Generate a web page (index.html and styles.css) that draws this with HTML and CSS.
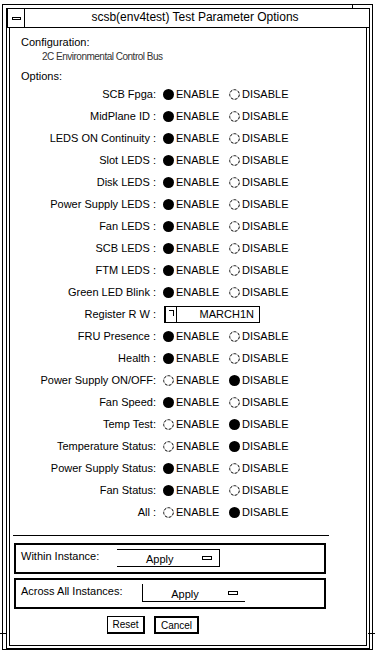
FILE: index.html
```html
<!DOCTYPE html>
<html>
<head>
<meta charset="utf-8">
<link rel="stylesheet" href="styles.css">
</head>
<body>
<div class="window">
  <span class="tick tick-top"></span>
  <span class="tick tick-left"></span>
  <span class="tick tick-right"></span>
  <div class="titlebar">
    <div class="menubtn"><span class="dash"></span></div>
    <div class="title">scsb(env4test) Test Parameter Options</div>
  </div>
  <div class="inner">
    <div class="cfg">Configuration:</div>
    <div class="cfgval">2C Environmental Control Bus</div>
    <div class="opts">Options:</div>
    <div class="rows">
      <div class="row"><span class="lbl">SCB Fpga:</span><span class="opt"><svg class="rd" viewBox="0 0 11 11"><circle cx="5.5" cy="5.5" r="5.5"/></svg>ENABLE</span><span class="opt"><svg class="rd off" viewBox="0 0 11 11"><circle cx="5.5" cy="5.5" r="4.8"/></svg>DISABLE</span></div>
      <div class="row"><span class="lbl">MidPlane ID :</span><span class="opt"><svg class="rd" viewBox="0 0 11 11"><circle cx="5.5" cy="5.5" r="5.5"/></svg>ENABLE</span><span class="opt"><svg class="rd off" viewBox="0 0 11 11"><circle cx="5.5" cy="5.5" r="4.8"/></svg>DISABLE</span></div>
      <div class="row"><span class="lbl">LEDS ON Continuity :</span><span class="opt"><svg class="rd" viewBox="0 0 11 11"><circle cx="5.5" cy="5.5" r="5.5"/></svg>ENABLE</span><span class="opt"><svg class="rd off" viewBox="0 0 11 11"><circle cx="5.5" cy="5.5" r="4.8"/></svg>DISABLE</span></div>
      <div class="row"><span class="lbl">Slot LEDS :</span><span class="opt"><svg class="rd" viewBox="0 0 11 11"><circle cx="5.5" cy="5.5" r="5.5"/></svg>ENABLE</span><span class="opt"><svg class="rd off" viewBox="0 0 11 11"><circle cx="5.5" cy="5.5" r="4.8"/></svg>DISABLE</span></div>
      <div class="row"><span class="lbl">Disk LEDS :</span><span class="opt"><svg class="rd" viewBox="0 0 11 11"><circle cx="5.5" cy="5.5" r="5.5"/></svg>ENABLE</span><span class="opt"><svg class="rd off" viewBox="0 0 11 11"><circle cx="5.5" cy="5.5" r="4.8"/></svg>DISABLE</span></div>
      <div class="row"><span class="lbl">Power Supply LEDS :</span><span class="opt"><svg class="rd" viewBox="0 0 11 11"><circle cx="5.5" cy="5.5" r="5.5"/></svg>ENABLE</span><span class="opt"><svg class="rd off" viewBox="0 0 11 11"><circle cx="5.5" cy="5.5" r="4.8"/></svg>DISABLE</span></div>
      <div class="row"><span class="lbl">Fan LEDS :</span><span class="opt"><svg class="rd" viewBox="0 0 11 11"><circle cx="5.5" cy="5.5" r="5.5"/></svg>ENABLE</span><span class="opt"><svg class="rd off" viewBox="0 0 11 11"><circle cx="5.5" cy="5.5" r="4.8"/></svg>DISABLE</span></div>
      <div class="row"><span class="lbl">SCB LEDS :</span><span class="opt"><svg class="rd" viewBox="0 0 11 11"><circle cx="5.5" cy="5.5" r="5.5"/></svg>ENABLE</span><span class="opt"><svg class="rd off" viewBox="0 0 11 11"><circle cx="5.5" cy="5.5" r="4.8"/></svg>DISABLE</span></div>
      <div class="row"><span class="lbl">FTM LEDS :</span><span class="opt"><svg class="rd" viewBox="0 0 11 11"><circle cx="5.5" cy="5.5" r="5.5"/></svg>ENABLE</span><span class="opt"><svg class="rd off" viewBox="0 0 11 11"><circle cx="5.5" cy="5.5" r="4.8"/></svg>DISABLE</span></div>
      <div class="row"><span class="lbl">Green LED Blink :</span><span class="opt"><svg class="rd" viewBox="0 0 11 11"><circle cx="5.5" cy="5.5" r="5.5"/></svg>ENABLE</span><span class="opt"><svg class="rd off" viewBox="0 0 11 11"><circle cx="5.5" cy="5.5" r="4.8"/></svg>DISABLE</span></div>
      <div class="row"><span class="lbl">Register R W :</span><span class="field"><span class="fieldbtn"><span class="fieldglyph"></span></span><span class="fieldtext">MARCH1N</span></span></div>
      <div class="row"><span class="lbl">FRU Presence :</span><span class="opt"><svg class="rd" viewBox="0 0 11 11"><circle cx="5.5" cy="5.5" r="5.5"/></svg>ENABLE</span><span class="opt"><svg class="rd off" viewBox="0 0 11 11"><circle cx="5.5" cy="5.5" r="4.8"/></svg>DISABLE</span></div>
      <div class="row"><span class="lbl">Health :</span><span class="opt"><svg class="rd" viewBox="0 0 11 11"><circle cx="5.5" cy="5.5" r="5.5"/></svg>ENABLE</span><span class="opt"><svg class="rd off" viewBox="0 0 11 11"><circle cx="5.5" cy="5.5" r="4.8"/></svg>DISABLE</span></div>
      <div class="row"><span class="lbl">Power Supply ON/OFF:</span><span class="opt"><svg class="rd off" viewBox="0 0 11 11"><circle cx="5.5" cy="5.5" r="4.8"/></svg>ENABLE</span><span class="opt"><svg class="rd" viewBox="0 0 11 11"><circle cx="5.5" cy="5.5" r="5.5"/></svg>DISABLE</span></div>
      <div class="row"><span class="lbl">Fan Speed:</span><span class="opt"><svg class="rd" viewBox="0 0 11 11"><circle cx="5.5" cy="5.5" r="5.5"/></svg>ENABLE</span><span class="opt"><svg class="rd off" viewBox="0 0 11 11"><circle cx="5.5" cy="5.5" r="4.8"/></svg>DISABLE</span></div>
      <div class="row"><span class="lbl">Temp Test:</span><span class="opt"><svg class="rd off" viewBox="0 0 11 11"><circle cx="5.5" cy="5.5" r="4.8"/></svg>ENABLE</span><span class="opt"><svg class="rd" viewBox="0 0 11 11"><circle cx="5.5" cy="5.5" r="5.5"/></svg>DISABLE</span></div>
      <div class="row"><span class="lbl">Temperature Status:</span><span class="opt"><svg class="rd off" viewBox="0 0 11 11"><circle cx="5.5" cy="5.5" r="4.8"/></svg>ENABLE</span><span class="opt"><svg class="rd" viewBox="0 0 11 11"><circle cx="5.5" cy="5.5" r="5.5"/></svg>DISABLE</span></div>
      <div class="row"><span class="lbl">Power Supply Status:</span><span class="opt"><svg class="rd" viewBox="0 0 11 11"><circle cx="5.5" cy="5.5" r="5.5"/></svg>ENABLE</span><span class="opt"><svg class="rd off" viewBox="0 0 11 11"><circle cx="5.5" cy="5.5" r="4.8"/></svg>DISABLE</span></div>
      <div class="row"><span class="lbl">Fan Status:</span><span class="opt"><svg class="rd" viewBox="0 0 11 11"><circle cx="5.5" cy="5.5" r="5.5"/></svg>ENABLE</span><span class="opt"><svg class="rd off" viewBox="0 0 11 11"><circle cx="5.5" cy="5.5" r="4.8"/></svg>DISABLE</span></div>
      <div class="row"><span class="lbl">All :</span><span class="opt"><svg class="rd off" viewBox="0 0 11 11"><circle cx="5.5" cy="5.5" r="4.8"/></svg>ENABLE</span><span class="opt"><svg class="rd" viewBox="0 0 11 11"><circle cx="5.5" cy="5.5" r="5.5"/></svg>DISABLE</span></div>
    </div>
    <div class="sep"></div>
    <div class="group">
      <span class="glbl">Within Instance:</span>
      <span class="dd dd-within"><span class="ddtext">Apply</span><span class="ddglyph"></span></span>
    </div>
    <div class="group group2">
      <span class="glbl">Across All Instances:</span>
      <span class="dd dd-across"><span class="ddtext">Apply</span><span class="ddglyph"></span></span>
    </div>
    <div class="buttons">
      <span class="btn btn-reset">Reset</span>
      <span class="btn btn-cancel">Cancel</span>
    </div>
  </div>
</div>
</body>
</html>
```

FILE: styles.css
```css
html, body {
  margin: 0;
  padding: 0;
  background: #fff;
}
body {
  font-family: "Liberation Sans", Arial, sans-serif;
  font-size: 11px;
  color: #000;
}
.window {
  position: relative;
  box-sizing: border-box;
  margin: 4px 0 0 2px;
  width: 371px;
  height: 646px;
  border: 1px solid #000;
  padding: 3px 2px 0 3px;
  display: flex;
  flex-direction: column;
}
.tick {
  position: absolute;
  background: #000;
}
.tick-top {
  left: 349px;
  top: -1px;
  width: 1px;
  height: 4px;
}
.tick-left {
  left: -3px;
  top: 628px;
  width: 7px;
  height: 1px;
}
.tick-right {
  right: -3px;
  top: 628px;
  width: 7px;
  height: 1px;
}
.titlebar {
  box-sizing: border-box;
  height: 20px;
  border: 1px solid #000;
  border-left-width: 2px;
  display: flex;
}
.menubtn {
  width: 16px;
  border-right: 1px solid #000;
  display: flex;
  align-items: center;
  justify-content: center;
}
.dash {
  box-sizing: border-box;
  width: 9px;
  height: 3px;
  border: 1px solid #000;
  margin-top: 1px;
}
.title {
  flex: 1;
  text-align: center;
  font-size: 12px;
  line-height: 17px;
  padding-right: 4px;
}
.inner {
  flex: 1;
  border-left: 4px double #000;
  border-right: 4px double #000;
  border-bottom: 4px double #000;
  padding-top: 7px;
}
.cfg, .cfgval, .opts {
  line-height: 14px;
}
.cfg { padding-left: 11px; }
.cfgval {
  padding-left: 32px;
  margin-top: 1px;
  font-size: 10px;
  letter-spacing: -0.5px;
  color: #333;
}
.opts {
  padding-left: 11px;
  margin-top: 5px;
}
.rows {
  display: flex;
  flex-direction: column;
}
.row {
  height: 22px;
  display: flex;
  align-items: center;
}
.lbl {
  width: 146px;
  text-align: right;
  white-space: nowrap;
}
.opt {
  display: flex;
  align-items: center;
  width: 66px;
}
.lbl + .opt {
  margin-left: 7px;
}
.rd {
  width: 11px;
  height: 11px;
  margin-right: 2px;
  flex: none;
}
.rd circle {
  fill: #000;
}
.rd.off circle {
  fill: none;
  stroke: #000;
  stroke-width: 1;
  stroke-dasharray: 3 1.2;
}
.field {
  margin-left: 8px;
  box-sizing: border-box;
  width: 96px;
  height: 17px;
  border: 1px solid #000;
  border-left-width: 2px;
  display: flex;
}
.fieldbtn {
  width: 10px;
  border-right: 1px solid #000;
  display: flex;
  justify-content: center;
  padding-top: 3px;
}
.fieldglyph {
  box-sizing: border-box;
  width: 5px;
  height: 6px;
  border-top: 1px solid #000;
  border-right: 1px solid #000;
}
.fieldtext {
  flex: 1;
  text-align: right;
  padding-right: 5px;
  line-height: 15px;
}
.sep {
  margin: 12px 0 0 3px;
  width: 316px;
  height: 1px;
  background: #000;
}
.group {
  box-sizing: border-box;
  margin: 7px 0 0 4px;
  width: 312px;
  height: 31px;
  border: 2px solid #000;
  display: flex;
  align-items: flex-start;
  padding: 4px 0 0 5px;
}
.group2 {
  margin-top: 4px;
}
.glbl {
  line-height: 14px;
  white-space: nowrap;
}
.dd {
  box-sizing: border-box;
  height: 18px;
  width: 103px;
  display: flex;
  align-items: center;
  position: relative;
}
.dd-within {
  margin-left: 18px;
  border-top: 1px solid #000;
  border-right: 1px solid #000;
  border-bottom: 1px solid #000;
}
.dd-across {
  margin-left: 19px;
  border-left: 1px solid #000;
  border-bottom: 1px solid #000;
}
.ddtext {
  flex: 1;
  text-align: center;
  padding-top: 2px;
}
.ddglyph {
  box-sizing: border-box;
  width: 10px;
  height: 4px;
  border: 1px solid #000;
  margin-right: 7px;
}
.buttons {
  display: flex;
  gap: 9px;
  margin-top: 7px;
  padding-left: 97px;
}
.btn {
  box-sizing: border-box;
  height: 18px;
  display: flex;
  align-items: center;
  justify-content: center;
  font-size: 10px;
}
.btn-reset {
  width: 38px;
  border: 1px solid #000;
  border-right-width: 2px;
  border-bottom-width: 2px;
}
.btn-cancel {
  width: 45px;
  border: 2px solid #000;
}
```
